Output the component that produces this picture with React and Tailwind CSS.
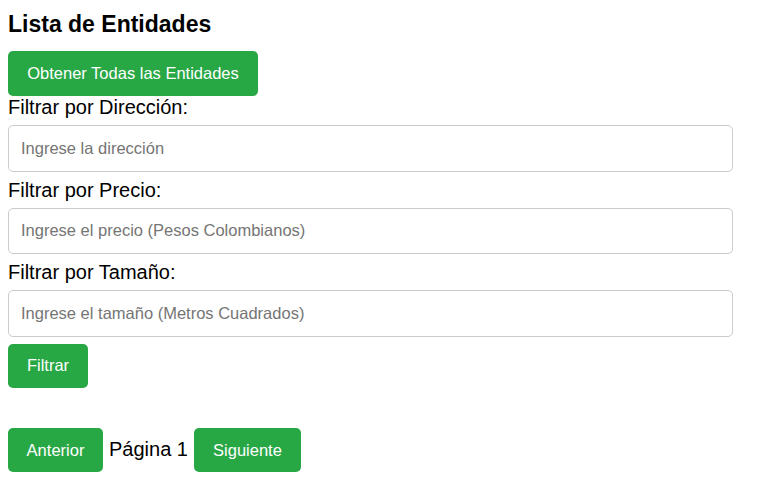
import { useState } from "react";

const buttonClass = "flex items-center justify-center rounded-[5px] bg-[#28a745] px-[19px] text-[16.5px] leading-[19px] text-white";

function FilterField({ label, placeholder, value, onChange }) {
  return (
    <>
      <label className="mb-[6px] block text-[20px] leading-[23px] text-black">{label}</label>
      <input
        value={value}
        onChange={(event) => onChange(event.target.value)}
        placeholder={placeholder}
        className="mb-[7px] block h-[46.5px] w-[725px] rounded-[5px] border border-[#cccccc] px-[12px] text-[16.5px] text-black outline-none placeholder:text-[#757575]"
      />
    </>
  );
}

export default function App() {
  const [address, setAddress] = useState("");
  const [price, setPrice] = useState("");
  const [size, setSize] = useState("");
  const [page, setPage] = useState(1);

  return (
    <main className="min-h-[503px] bg-white px-[8px] pt-[10px] font-['Liberation_Sans',Arial,sans-serif]">
      <h2 className="mb-[13px] text-[23px] font-bold leading-[28px] text-black">Lista de Entidades</h2>
      <button className={`${buttonClass} h-[45px] w-[250px]`}>Obtener Todas las Entidades</button>
      <FilterField label="Filtrar por Dirección:" placeholder="Ingrese la dirección" value={address} onChange={setAddress} />
      <FilterField label="Filtrar por Precio:" placeholder="Ingrese el precio (Pesos Colombianos)" value={price} onChange={setPrice} />
      <FilterField label="Filtrar por Tamaño:" placeholder="Ingrese el tamaño (Metros Cuadrados)" value={size} onChange={setSize} />
      <button className={`${buttonClass} h-[44px] w-[80px]`}>Filtrar</button>
      <div className="mt-[40.5px] flex items-baseline gap-[6px]">
        <button onClick={() => setPage(Math.max(1, page - 1))} className={`${buttonClass} h-[44px] w-[95px]`}>Anterior</button>
        <span className="text-[20px] leading-[23px] text-black">Página {page}</span>
        <button onClick={() => setPage(page + 1)} className={`${buttonClass} h-[44px] w-[107px]`}>Siguiente</button>
      </div>
    </main>
  );
}
